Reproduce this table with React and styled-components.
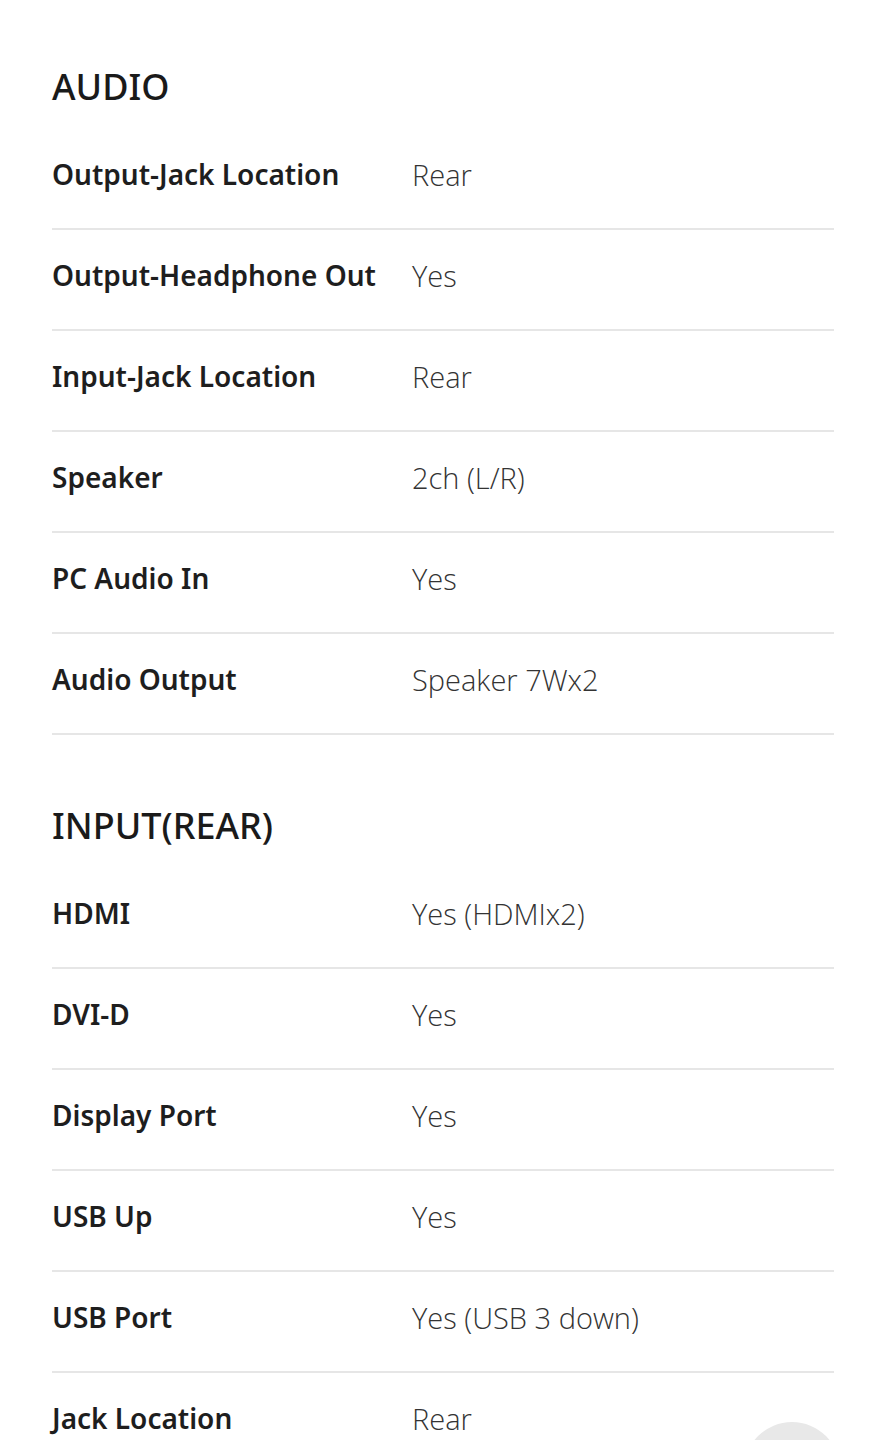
import styled, { createGlobalStyle } from 'styled-components'

const GlobalStyle = createGlobalStyle`
  html, body {
    margin: 0;
    padding: 0;
    background: #fff;
  }
  body {
    font-family: 'Noto Sans', 'Open Sans', sans-serif;
    color: #222;
    overflow: hidden;
  }
`

const Page = styled.div`
  position: relative;
  width: 886px;
  height: 1440px;
  overflow: hidden;
  padding: 67px 52px 0 52px;
  box-sizing: border-box;
`

const Section = styled.section`
  display: flex;
  flex-direction: column;
  margin-bottom: 71px;
`

const Heading = styled.h2`
  margin: 0 0 22px 0;
  font-family: 'Noto Sans', sans-serif;
  font-size: 36px;
  line-height: 40px;
  font-weight: 500;
  color: #1a1a1a;
`

const Row = styled.div`
  display: grid;
  grid-template-columns: 360px 1fr;
  align-items: center;
  height: 99px;
  border-bottom: 2px solid #e6e6e6;
`

const Label = styled.div`
  font-family: 'Noto Sans', sans-serif;
  font-size: 28px;
  font-weight: 600;
  color: #1e1e1e;
  margin-top: -9px;
  white-space: nowrap;
`

const Value = styled.div`
  font-family: 'Open Sans', sans-serif;
  font-size: 29px;
  font-weight: 300;
  color: #333;
  margin-top: -9px;
`

const TopButton = styled.div`
  position: absolute;
  left: 744px;
  top: 1422px;
  width: 96px;
  height: 96px;
  border-radius: 50%;
  background: #e8e8e8;
`

const sections = [
  {
    title: 'AUDIO',
    rows: [
      ['Output-Jack Location', 'Rear'],
      ['Output-Headphone Out', 'Yes'],
      ['Input-Jack Location', 'Rear'],
      ['Speaker', '2ch (L/R)'],
      ['PC Audio In', 'Yes'],
      ['Audio Output', 'Speaker 7Wx2'],
    ],
  },
  {
    title: 'INPUT(REAR)',
    rows: [
      ['HDMI', 'Yes (HDMIx2)'],
      ['DVI-D', 'Yes'],
      ['Display Port', 'Yes'],
      ['USB Up', 'Yes'],
      ['USB Port', 'Yes (USB 3 down)'],
      ['Jack Location', 'Rear'],
    ],
  },
]

const App = () => {
  return (
    <>
      <GlobalStyle />
      <Page>
        {sections.map((section) => (
          <Section key={section.title}>
            <Heading>{section.title}</Heading>
            {section.rows.map(([label, value]) => (
              <Row key={label}>
                <Label>{label}</Label>
                <Value>{value}</Value>
              </Row>
            ))}
          </Section>
        ))}
        <TopButton />
      </Page>
    </>
  )
}

export default App
